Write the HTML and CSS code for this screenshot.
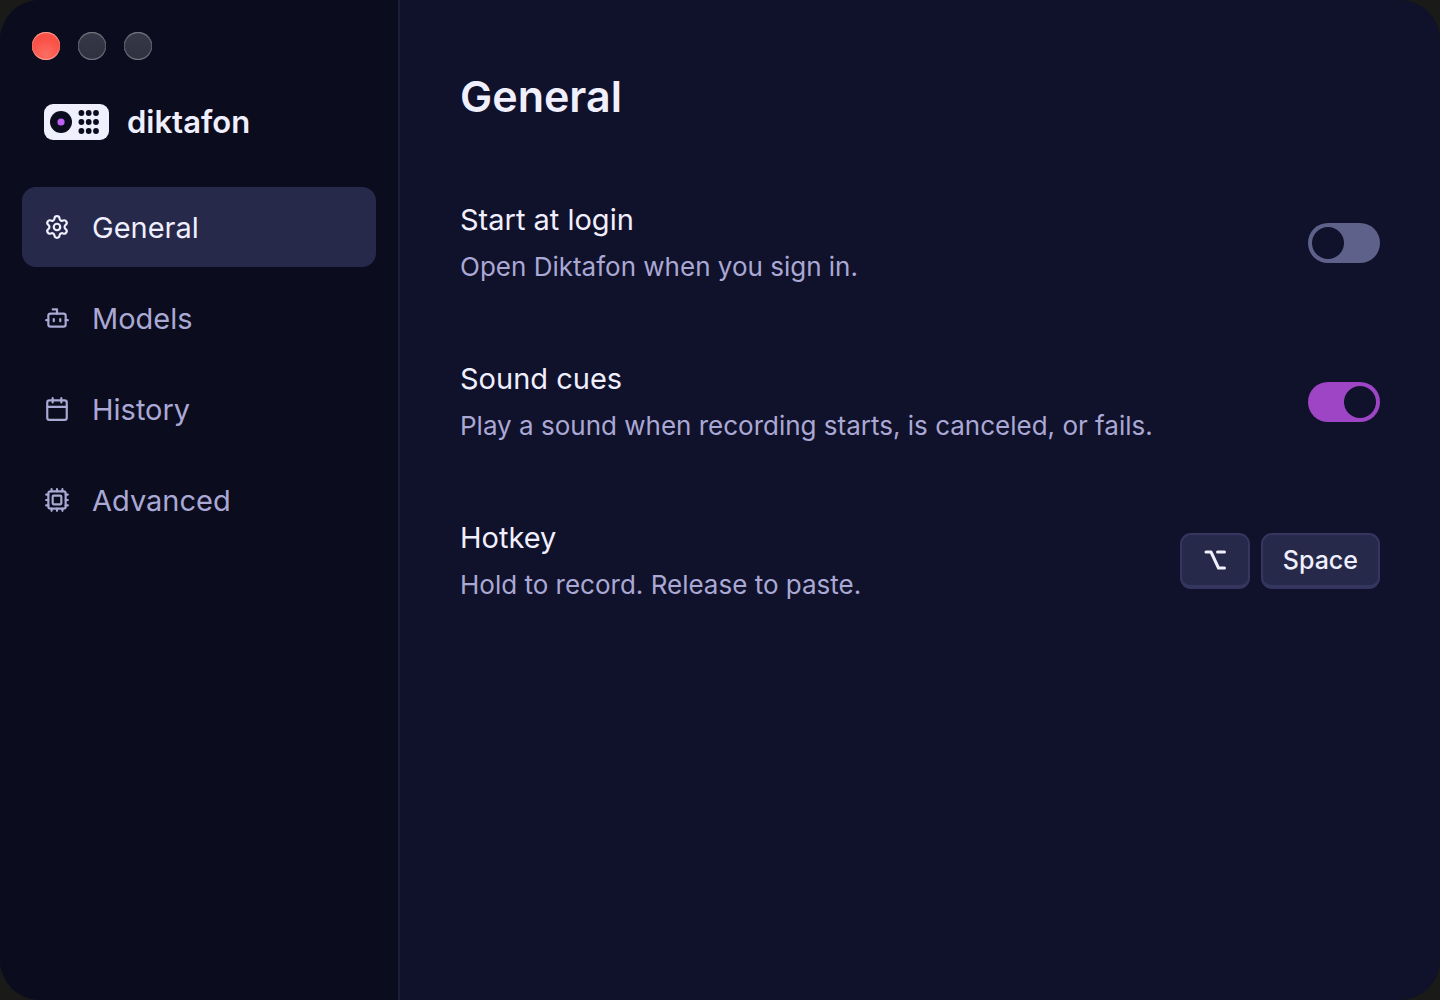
FILE: index.html
```html
<!DOCTYPE html>
<html lang="en">
<head>
  <meta charset="UTF-8">
  <meta name="viewport" content="width=device-width, initial-scale=1.0">
  <title>Diktafon - General</title>
  <link rel="stylesheet" href="styles.css">
</head>
<body>
  <div class="window">
    <aside class="sidebar">
      <div class="window-controls">
        <button class="light close" aria-label="Close"></button>
        <button class="light" aria-label="Minimize"></button>
        <button class="light" aria-label="Zoom"></button>
      </div>

      <div class="brand">
        <svg class="brand-logo" viewBox="0 0 65 36" aria-hidden="true">
          <rect width="65" height="36" rx="9" fill="#f0effe"/>
          <circle cx="17" cy="18" r="11" fill="#0b0c1d"/>
          <circle cx="17" cy="18" r="3.6" fill="#c061f5"/>
          <g fill="#0b0c1d">
            <circle cx="37.4" cy="9" r="2.9"/><circle cx="44.7" cy="9" r="2.9"/><circle cx="52" cy="9" r="2.9"/>
            <circle cx="37.4" cy="18" r="2.9"/><circle cx="44.7" cy="18" r="2.9"/><circle cx="52" cy="18" r="2.9"/>
            <circle cx="37.4" cy="27" r="2.9"/><circle cx="44.7" cy="27" r="2.9"/><circle cx="52" cy="27" r="2.9"/>
          </g>
        </svg>
        <span class="brand-name">diktafon</span>
      </div>

      <nav class="nav">
        <a class="nav-item active" href="#general" aria-current="page">
          <svg class="icon" viewBox="0 0 24 24" aria-hidden="true">
            <path d="M9.671 4.136a2.34 2.34 0 0 1 4.659 0 2.34 2.34 0 0 0 3.319 1.915 2.34 2.34 0 0 1 2.33 4.033 2.34 2.34 0 0 0 0 3.831 2.34 2.34 0 0 1-2.33 4.033 2.34 2.34 0 0 0-3.319 1.915 2.34 2.34 0 0 1-4.659 0 2.34 2.34 0 0 0-3.32-1.915 2.34 2.34 0 0 1-2.33-4.033 2.34 2.34 0 0 0 0-3.831A2.34 2.34 0 0 1 6.35 6.051a2.34 2.34 0 0 0 3.319-1.915"/>
            <circle cx="12" cy="12" r="3"/>
          </svg>
          General
        </a>
        <a class="nav-item" href="#models">
          <svg class="icon" viewBox="0 0 24 24" aria-hidden="true">
            <path d="M12 8V4H8"/>
            <rect width="16" height="12" x="4" y="8" rx="2"/>
            <path d="M2 14h2M20 14h2M15 13v2M9 13v2"/>
          </svg>
          Models
        </a>
        <a class="nav-item" href="#history">
          <svg class="icon" viewBox="0 0 24 24" aria-hidden="true">
            <path d="M8 2v4M16 2v4M3 10h18"/>
            <rect width="18" height="18" x="3" y="4" rx="2"/>
          </svg>
          History
        </a>
        <a class="nav-item" href="#advanced">
          <svg class="icon" viewBox="0 0 24 24" aria-hidden="true">
            <path d="M12 20v2M12 2v2M17 20v2M17 2v2M2 12h2M2 17h2M2 7h2M20 12h2M20 17h2M20 7h2M7 20v2M7 2v2"/>
            <rect x="4" y="4" width="16" height="16" rx="2"/>
            <rect x="8" y="8" width="8" height="8" rx="1"/>
          </svg>
          Advanced
        </a>
      </nav>
    </aside>

    <main class="content" id="general">
      <h1>General</h1>

      <div class="settings">
        <div class="setting">
          <div class="setting-text">
            <label for="startAtLogin">Start at login</label>
            <p id="startHint">Open Diktafon when you sign in.</p>
          </div>
          <input class="switch" type="checkbox" role="switch" id="startAtLogin" aria-describedby="startHint">
        </div>

        <div class="setting">
          <div class="setting-text">
            <label for="soundCues">Sound cues</label>
            <p id="soundHint">Play a sound when recording starts, is canceled, or fails.</p>
          </div>
          <input class="switch" type="checkbox" role="switch" id="soundCues" aria-describedby="soundHint" checked>
        </div>

        <div class="setting">
          <div class="setting-text">
            <h2>Hotkey</h2>
            <p>Hold to record. Release to paste.</p>
          </div>
          <div class="keys">
            <kbd>
              <svg class="key-icon" viewBox="0 0 24 24" role="img" aria-label="Option">
                <path d="M3 4h5l7.500 16H21.500M14.500 4H21.500"/>
              </svg>
            </kbd>
            <kbd>Space</kbd>
          </div>
        </div>
      </div>
    </main>
  </div>
</body>
</html>
```
FILE: styles.css
```css
* {
  box-sizing: border-box;
  margin: 0;
  padding: 0;
}

body {
  font-family: Inter, sans-serif;
  background: #1a1a18;
  color: #f0effe;
}

.window {
  display: flex;
  min-height: 100vh;
  border-radius: 40px;
  overflow: hidden;
  background: #10112a;
}

.sidebar {
  width: 400px;
  flex-shrink: 0;
  padding: 32px 22px;
  background: #0b0c1d;
  border-right: 2px solid #1c1e3d;
}

.window-controls {
  display: flex;
  gap: 18px;
  padding-left: 10px;
}

.light {
  width: 28px;
  height: 28px;
  border: none;
  border-radius: 50%;
  background: linear-gradient(#373847, #303140);
  box-shadow: inset 0 1px 1px #7d7e88, inset 0 -1px 1px #7d7e88, inset 0 0 1px 1px #484957;
}

.light.close {
  background: radial-gradient(circle at 50% 80%, #fb6e62, #fa5046 60%);
  box-shadow: inset 0 1px 1px #ffa69c, inset 0 -1px 1px #ffa69c;
}

.brand {
  display: flex;
  align-items: center;
  gap: 18px;
  height: 36px;
  margin-top: 44px;
  padding-left: 22px;
}

.brand-logo {
  width: 65px;
  height: 36px;
}

.brand-name {
  font-size: 31px;
  line-height: 36px;
  font-weight: 600;
}

.nav {
  display: flex;
  flex-direction: column;
  gap: 11px;
  margin-top: 47px;
}

.nav-item {
  display: flex;
  align-items: center;
  gap: 22px;
  height: 80px;
  padding: 0 22px;
  border-radius: 14px;
  color: #aaa8d4;
  font-size: 29px;
  font-weight: 400;
  text-decoration: none;
}

.nav-item.active {
  background: #262949;
  color: #f0effe;
}

.icon {
  width: 26px;
  height: 26px;
  fill: none;
  stroke: currentColor;
  stroke-width: 2;
  stroke-linecap: round;
  stroke-linejoin: round;
}

.content {
  flex: 1;
  padding: 68px 60px;
}

h1 {
  font-size: 43px;
  line-height: 56px;
  font-weight: 600;
}

.settings {
  display: flex;
  flex-direction: column;
  gap: 70px;
  margin-top: 74px;
}

.setting {
  display: flex;
  justify-content: space-between;
  align-items: center;
  gap: 24px;
}

.setting-text {
  padding-top: 2px;
}

.setting-text label,
.setting-text h2 {
  display: block;
  font-size: 29px;
  line-height: 40px;
  font-weight: 400;
}

.setting-text p {
  margin-top: 7px;
  color: #aaa8d4;
  font-size: 26px;
  line-height: 40px;
}

.switch {
  appearance: none;
  display: flex;
  flex-shrink: 0;
  width: 72px;
  height: 40px;
  padding: 4px;
  border-radius: 20px;
  background: #5e628a;
}

.switch::before {
  content: "";
  width: 32px;
  height: 32px;
  border-radius: 50%;
  background: #10112a;
}

.switch:checked {
  justify-content: flex-end;
  background: #9d45c4;
}

.keys {
  display: flex;
  gap: 11px;
}

kbd {
  display: flex;
  align-items: center;
  justify-content: center;
  min-width: 70px;
  height: 56px;
  padding: 0 20px;
  border: 2px solid #34365f;
  border-bottom-width: 4px;
  border-radius: 11px;
  background: #262949;
  font-family: inherit;
  font-size: 25px;
  font-weight: 500;
}

.key-icon {
  width: 24px;
  height: 24px;
  fill: none;
  stroke: currentColor;
  stroke-width: 3;
  stroke-linecap: round;
  stroke-linejoin: round;
}
```
